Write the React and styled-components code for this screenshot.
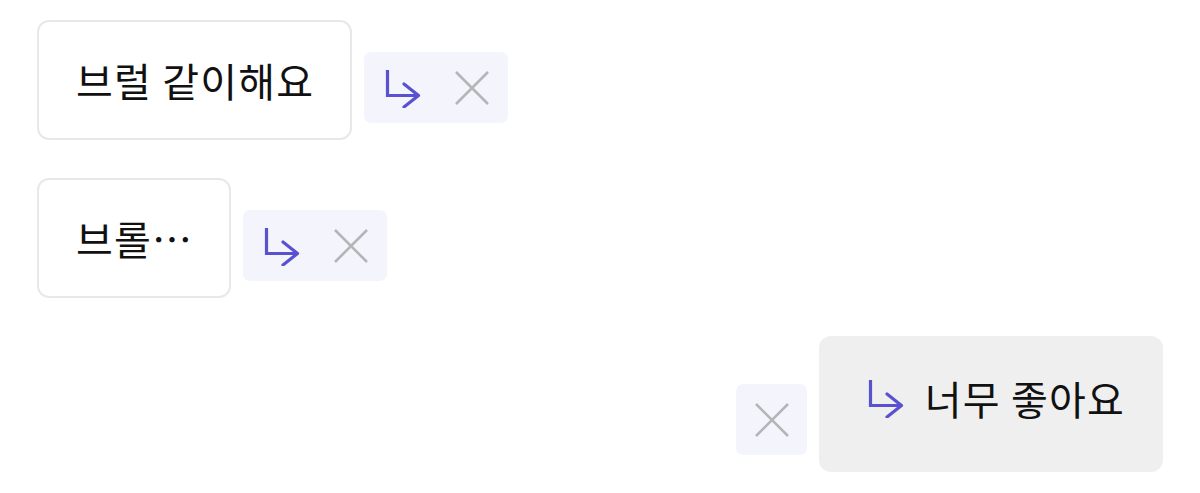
import React from 'react';
import styled, { createGlobalStyle } from 'styled-components';

const GlobalStyle = createGlobalStyle`
 body {
   margin: 0;
   background: #ffffff;
   font-family: "Noto Sans CJK KR", "Noto Sans", sans-serif;
 }
`;

const Page = styled.div`
 display: flex;
 flex-direction: column;
 gap: 38px;
 padding: 20px 37px;
`;

const Row = styled.div`
 display: flex;
 align-items: flex-end;
 justify-content: ${props => props.right ? 'flex-end' : 'flex-start'};
 gap: 12px;
`;

const Bubble = styled.div`
 box-sizing: border-box;
 display: flex;
 align-items: center;
 height: ${props => props.mine ? '136px' : '120px'};
 padding: ${props => props.mine ? '0 38px 12px 49px' : '0 36px 0 37px'};
 border: ${props => props.mine ? 'none' : '2px solid #e8e8e8'};
 border-radius: 12px;
 background-color: ${props => props.mine ? '#efefef' : '#ffffff'};
 color: #111111;
 font-size: 40px;
 font-weight: 400;
 letter-spacing: 1.2px;
 white-space: nowrap;
`;

const ReplyArrow = styled.span`
 display: flex;
 margin-right: 21px;
`;

const ActionChip = styled.div`
 box-sizing: border-box;
 display: flex;
 align-items: center;
 justify-content: center;
 gap: 33px;
 height: 71px;
 min-width: 71px;
 padding: ${props => props.single ? '0 17px 0 18px' : '0 18px 0 21px'};
 margin-bottom: 17px;
 border-radius: 7px;
 background-color: #f4f4fd;
`;

const IconButton = styled.button`
 display: flex;
 padding: 0;
 border: none;
 background: none;
 cursor: pointer;
`;

const ArrowIcon = () => (
 <svg width="36" height="40" viewBox="0 0 36 40" fill="none">
   <path d="M2.5 2 V27.5 H33.5" stroke="#5a51cf" strokeWidth="3.2" strokeLinejoin="miter" />
   <path d="M19 16 L33.5 27.5 L19 39" stroke="#5a51cf" strokeWidth="3.2" strokeLinecap="round" strokeLinejoin="round" />
 </svg>
);

const CloseIcon = () => (
 <svg width="36" height="36" viewBox="0 0 36 36" fill="none">
   <path d="M2 2 L34 34 M34 2 L2 34" stroke="#b5b5b5" strokeWidth="2.6" />
 </svg>
);

const App = () => {
 return (
   <>
     <GlobalStyle />
     <Page>
       <Row>
         <Bubble>브럴 같이해요</Bubble>
         <ActionChip>
           <IconButton><ArrowIcon /></IconButton>
           <IconButton><CloseIcon /></IconButton>
         </ActionChip>
       </Row>
       <Row>
         <Bubble>브롤…</Bubble>
         <ActionChip>
           <IconButton><ArrowIcon /></IconButton>
           <IconButton><CloseIcon /></IconButton>
         </ActionChip>
       </Row>
       <Row right>
         <ActionChip single>
           <IconButton><CloseIcon /></IconButton>
         </ActionChip>
         <Bubble mine>
           <ReplyArrow><ArrowIcon /></ReplyArrow>
           너무 좋아요
         </Bubble>
       </Row>
     </Page>
   </>
 );
};

export default App;
